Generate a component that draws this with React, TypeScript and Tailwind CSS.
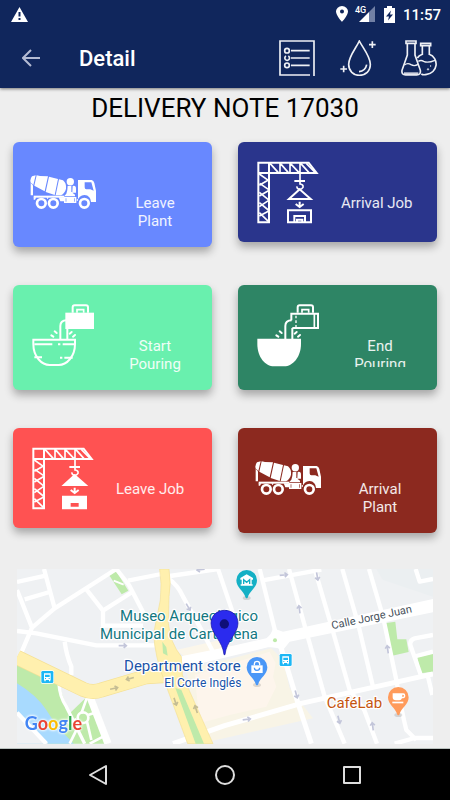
import type { ReactNode } from 'react';

function MixerTruckIcon() {
  return (
    <svg viewBox="90 90 198 198" className="size-[66px] shrink-0" fill="currentColor" aria-hidden="true">
      <path d="M96 139 L107 136 L100 165 L92 157 Q89 148 96 139Z" />
      <path d="M110 136 L120 138 L144 139 L134 184 L103 167Z" />
      <path d="M147 140 L174 147 L164 195 L137 186Z" />
      <path d="M177 148 L189 151 Q200 160 198 176 Q195 189 183 196 L167 196Z" />
      <path d="M92 158 L99 166 V196 H92Z" />
      <circle cx="211" cy="155" r="11" />
      <path d="M203 168 L214 167 V186 H217 L218 168 Q228 165 228 176 V188 H217 L225 194 V199 H193 Q194 196 199 191 Q203 180 203 168Z" />
      <path d="M101 197 H193 V203 H101Z" />
      <path fillRule="evenodd" d="M192 201 H229 V219 H192Z M197 205 V215 H199 V205Z M222 205 V215 H224 V205Z" />
      <path
        fillRule="evenodd"
        d="M234 150 H275 Q281 151 283 159 L288 182 V216 H273 A20 20 0 0 0 233 214 L229 210 L234 206Z M254 157 H274 L281 182 L271 178 H259 Q254 178 254 172Z"
      />
      <g fill="none" stroke="currentColor" strokeWidth="8">
        <circle cx="124" cy="220" r="13" />
        <circle cx="160" cy="220" r="13" />
        <circle cx="253" cy="220" r="13" />
      </g>
      <path d="M101 202 H109 L105 209 H101Z M139 202 H146 L143 208Z M176 202 H192 V214 H181Z" />
    </svg>
  );
}

function CraneIcon({ solid = false }: { solid?: boolean }) {
  return (
    <svg viewBox="90 90 198 198" className="size-[66px] shrink-0" fill="none" stroke="currentColor" strokeWidth="6" aria-hidden="true">
      <path d="M100 98 H251 L275 129 H132 V277 H100Z" />
      <path d="M100 129 H132 V98" />
      <path
        strokeWidth="5"
        d="M135 100 L160 128 M165 128 V98 M166 100 L190 128 M195 128 V98 M196 100 L222 128 M225 98 V150 M227 100 L252 128 M244 100 L271 128"
      />
      <path
        strokeWidth="5"
        d="M103 132 L130 151 M130 150 L103 166 M104 160 L130 178 M130 182 L103 198 M103 187 L130 209 M130 212 L103 230 M103 218 L130 240 M130 244 L103 258 M103 248 L130 274"
      />
      <path d="M208 153 H240" />
      <path d="M225 155 V162 Q236 164 234 172 Q230 179 222 178 Q216 176 215 169" strokeWidth="5" />
      <path d="M224 178 L192 207 H257Z" fill={solid ? 'currentColor' : 'none'} strokeWidth="6" />
      <path d="M224 215 V230 M212 222 L224 231 L236 222" strokeWidth="6" />
      {solid ? (
        <path d="M186 239 H261 V280 H186Z M212 261 V272 H236 V261Z" fill="currentColor" fillRule="evenodd" stroke="none" />
      ) : (
        <path d="M189 241 H258 V277 H189Z M208 277 V258 H240 V277 M216 277 V269 H232 V277" strokeWidth="6" />
      )}
    </svg>
  );
}

function PouringIcon({ full = false }: { full?: boolean }) {
  return (
    <svg viewBox="90 83 198 198" className="size-[66px] shrink-0" fill="none" stroke="currentColor" strokeWidth="6" aria-hidden="true">
      <path d="M218 112 V96 Q218 90 224 90 H258 Q264 90 264 96 V112" />
      <path d="M231 112 V103 H251 V112" strokeWidth="5" />
      {full ? (
        <>
          <path d="M199 135 V115 H279 V158 H202" />
          <path d="M268 115 V158" strokeWidth="5" />
          <path d="M213 121 V156" strokeWidth="4" strokeDasharray="8 6" />
        </>
      ) : (
        <path d="M196 112 H282 V161 H196Z" fill="currentColor" stroke="none" />
      )}
      <path d="M200 135 Q181 135 181 152 V192 M202 158 V192" />
      <path d="M164 168 L170 173 M154 180 L160 184 M215 170 L209 175 M225 179 L219 184" strokeLinecap="round" />
      {full ? (
        <path d="M97 190 H228 V206 C228 246 202 273 178 273 H147 C121 273 97 246 97 206Z" fill="currentColor" stroke="none" />
      ) : (
        <>
          <path d="M100 193 H225 V206 C225 244 200 269 176 269 H149 C125 269 100 244 100 206Z" />
          <path d="M103 207 H157 M174 207 H181 M188 207 H222 M103 246 H126 M180 247 H187 M193 247 H218" />
        </>
      )}
    </svg>
  );
}

function ListIcon() {
  return (
    <svg viewBox="162 120 108 108" className="size-9" fill="none" stroke="currentColor" strokeWidth="5" aria-hidden="true">
      <path d="M267 228 V123 H165 V225 H255" />
      <path d="M198 152 H254 M198 174 H254 M198 196 H254" />
      <circle cx="186" cy="152" r="7" />
      <path d="M183 168 A7 7 0 1 0 190 168" />
      <circle cx="186" cy="196" r="7" />
    </svg>
  );
}

function DropIcon() {
  return (
    <svg viewBox="345 120 108 108" className="size-9" fill="none" stroke="currentColor" strokeWidth="5" aria-hidden="true">
      <path d="M403 123 C394 143 371 169 371 193 C371 213 385 226 403 226 C422 226 436 213 436 193 C436 169 413 143 403 123Z" />
      <path d="M402 215 Q421 214 425 194" />
      <path d="M442 124 V144 M432 134 H452 M356 197 V217 M346 207 H366" />
    </svg>
  );
}

function FlasksIcon() {
  return (
    <svg viewBox="529 120 108 108" className="size-9" fill="none" stroke="currentColor" strokeWidth="5" aria-hidden="true">
      <path d="M544 123 H574 V130 H544Z M548 131 V165 L532 211 Q530 225 543 225 H576 Q589 225 587 211 L571 165 V131" />
      <path d="M539 195 Q549 187 559 194 Q569 200 580 193" strokeWidth="4" />
      <path d="M538 221 H581" strokeWidth="8" opacity="0.85" />
      <path d="M588 130 H618 V137 H588Z M593 138 V163 Q582 167 578 174 M614 138 V163 A31 31 0 0 1 606 223 Q596 226 590 222" />
      <path d="M581 184 Q589 179 597 184 Q609 190 631 181" strokeWidth="4" />
      <circle cx="610" cy="208" r="2" strokeWidth="3" />
      <circle cx="618" cy="198" r="1" strokeWidth="3" />
    </svg>
  );
}

const TILES: {
  label: string;
  icon: ReactNode;
  tile: string;
  text: string;
}[] = [
  { label: 'Leave Plant', icon: <MixerTruckIcon />, tile: 'h-[105px] bg-[#6888ff]', text: 'px-2 text-center' },
  { label: 'Arrival Job', icon: <CraneIcon />, tile: 'h-[100px] bg-[#2a358c]', text: 'text-left' },
  { label: 'Start Pouring', icon: <PouringIcon />, tile: 'h-[105px] bg-[#69f0ae]', text: 'px-2 text-center' },
  { label: 'End Pouring', icon: <PouringIcon full />, tile: 'h-[105px] bg-[#2e8565]', text: 'h-[30px] overflow-hidden px-2 text-center' },
  { label: 'Leave Job', icon: <CraneIcon solid />, tile: 'h-[100px] bg-[#ff5252]', text: 'text-left' },
  { label: 'Arrival Plant', icon: <MixerTruckIcon />, tile: 'h-[105px] bg-[#8c291f]', text: 'px-2 text-center' },
];

function Arrow({ x, y, angle, color = '#c3c6da' }: { x: number; y: number; angle: number; color?: string }) {
  return (
    <path
      d="M-13 0 H8 M2 -7 L10 0 L2 7"
      transform={`translate(${x} ${y}) rotate(${angle})`}
      stroke={color}
      strokeWidth="5"
      fill="none"
    />
  );
}

function BusStop({ x, y }: { x: number; y: number }) {
  return (
    <g transform={`translate(${x} ${y})`}>
      <rect x="-2" y="-2" width="40" height="40" rx="5" fill="#fff" />
      <rect width="36" height="36" rx="4" fill="#1db7f5" />
      <path fillRule="evenodd" fill="#fff" d="M8 7 H28 V27 H27 V31 H23 V27 H13 V31 H9 V27 H8Z M11 11 V18 H25 V11Z M11 21 V24 H14 V21Z M22 21 V24 H25 V21Z" />
    </g>
  );
}

function PoiPin({ x, y, color, children }: { x: number; y: number; color: string; children: ReactNode }) {
  return (
    <g transform={`translate(${x} ${y})`}>
      <ellipse cx="0" cy="53" rx="12" ry="6" fill="#000" opacity="0.12" />
      <path d="M0 -31 A31 31 0 0 1 31 0 C31 22 10 30 3 52 Q0 56 -3 52 C-10 30 -31 22 -31 0 A31 31 0 0 1 0 -31Z" fill={color} />
      {children}
    </g>
  );
}

function LocationMap() {
  return (
    <svg viewBox="52 27 1248 524" className="block h-auto w-full bg-[#eff1f3]" role="img" aria-label="Job location map">
      {/* blocks */}
      <path d="M1130 27 H1300 V110 L1150 60Z" fill="#ebeff1" />
      <path d="M530 270 L660 240 L700 262 L560 295Z" fill="#fbf6ea" />
      <path d="M560 330 L815 265 L850 300 L870 385 L940 475 L600 551Z" fill="#f8f4e6" />
      <path d="M585 345 L810 275 L828 310 L820 350 L830 380 L800 440 L690 465 L600 490Z" fill="#fdf5ec" />

      {/* park and water */}
      <path d="M52 310 L178 372 L200 440 L262 408 L325 551 H52Z" fill="#beeaaa" />
      <path d="M180 374 L260 412 L208 462Z" fill="#eff1f3" />
      <path d="M52 370 Q110 405 140 450 Q170 500 222 551 H52Z" fill="#a8dafe" />
      <path d="M52 455 L145 551 H52Z" fill="#eff1f3" />
      <path d="M326 42 L348 31 L386 92 L366 103Z" fill="#beeaaa" />
      <path d="M1155 190 L1187 185 L1193 238 L1220 238 L1227 276 L1178 287Z" fill="#beeaaa" />
      <path d="M1253 292 L1300 280 V335 L1263 340Z" fill="#beeaaa" />

      {/* streets */}
      <g fill="none" stroke="#fff" strokeWidth="13" strokeLinejoin="round">
        <path d="M52 458 L140 551" />
        <path d="M52 66 L138 47 M133 27 L165 145 M75 118 L150 96 M52 90 L97 203 L64 280" />
        <path d="M97 203 L165 145 L350 27 L388 75 L432 160" />
        <path d="M260 88 L310 152 V197 H430 M310 152 L398 96 M385 62 L485 42 M510 48 L655 27" />
        <path d="M52 213 L110 220 L290 256 H465 M195 245 Q200 285 215 320 V345" />
        <path d="M178 372 Q180 410 200 440 L255 551" strokeWidth="10" />
        <path d="M270 408 L325 551" strokeWidth="22" />
        <path d="M505 55 Q535 75 550 110 L600 200 L640 275" />
        <path d="M655 27 L690 130 L710 190" />
        <path d="M780 27 L828 220 M785 62 L965 29" />
        <path d="M840 250 L895 430 L935 551" strokeWidth="15" />
        <path d="M868 27 L920 215 L975 410 L1035 551" />
        <path d="M945 27 L1000 215 L1050 390 M1090 440 L1132 551" />
        <path d="M1050 390 L1094 450" />
        <path d="M1028 27 L1075 190 L1120 380 M1108 27 L1150 170 L1190 360 Q1205 450 1220 510 L1250 540" />
        <path d="M520 551 L675 497 L905 430 L1300 342" strokeWidth="15" />
        <path d="M1185 551 L1245 534 H1300" />
        <path d="M1300 225 L1245 235 Q1230 240 1232 255 L1265 350 M1250 288 L1300 275 M1248 27 L1260 65 L1300 57 M1285 350 L1298 405" />
      </g>
      <path d="M530 292 L700 257 L800 235 Q815 225 820 205 L850 215 L1300 117 V157 L870 245 L850 270 Q830 260 805 262 L560 320Z" fill="#fff" />
      <circle cx="826" cy="241" r="6" fill="#beeaaa" />
      <g fill="none" stroke="#fff" strokeWidth="8">
        <circle cx="250" cy="473" r="16" />
        <path d="M245 460 L262 412 M230 478 L205 490 M262 485 L275 540 M265 465 L295 455 M240 490 L210 551 M270 551 L310 530" />
        <path d="M342 62 L372 74" strokeWidth="6" />
      </g>

      {/* avenues */}
      <g fill="none" strokeLinejoin="round">
        <path d="M52 292 L250 388 Q278 400 305 390 L440 350 L520 345" stroke="#f5e196" strokeWidth="45" />
        <path d="M52 292 L250 388 Q278 400 305 390 L440 350 L520 345" stroke="#fff0ae" strokeWidth="41" />
      </g>
      <path d="M480 27 H508 Q515 70 508 110 L506 190 Q512 250 545 290 L548 345 L640 551 H564 L495 365 Q465 290 462 220 L482 120 Q487 70 480 27Z" fill="#fff0ae" stroke="#f5e196" strokeWidth="2" />
      <path d="M488 245 L500 262 L504 287 L490 280Z M527 384 L545 390 L613 551 H588Z" fill="#beeaaa" />

      <Arrow x={370} y={257} angle={0} />
      <Arrow x={566} y={142} angle={60} />
      <Arrow x={602} y={29} angle={172} />
      <Arrow x={344} y={385} angle={-12} color="#c5bd94" />
      <Arrow x={390} y={356} angle={165} color="#c5bd94" />
      <Arrow x={527} y={426} angle={72} color="#c5bd94" />
      <Arrow x={589} y={447} angle={-108} color="#c5bd94" />
      <Arrow x={853} y={45} angle={-6} />
      <Arrow x={953} y={50} angle={80} />
      <Arrow x={899} y={147} angle={-98} />
      <Arrow x={1164} y={267} angle={-98} />
      <Arrow x={890} y={404} angle={75} />
      <Arrow x={742} y={478} angle={-8} />
      <Arrow x={1018} y={480} angle={75} />
      <Arrow x={1119} y={498} angle={-98} />

      <BusStop x={125} y={333} />
      <BusStop x={840} y={282} />

      {/* labels */}
      <g className="font-['Roboto',sans-serif]" stroke="#fff" strokeWidth="7" strokeLinejoin="round" paintOrder="stroke">
        <g fontSize="45" textAnchor="end" fill="#12777f">
          <text x="775" y="183">Museo Arqueológico</text>
          <text x="775" y="238">Municipal de Cartagena</text>
        </g>
        <g textAnchor="end" fill="#1a53a8">
          <text x="723" y="334" fontSize="45">Department store</text>
          <text x="725" y="380" fontSize="36">El Corte Inglés</text>
        </g>
        <text x="981" y="444" fontSize="45" fill="#c5550f">CaféLab</text>
        <text x="998" y="208" fontSize="33" fill="#46505a" transform="rotate(-12 998 208)">Calle Jorge Juan</text>
      </g>
      <text x="75" y="511" fontSize="54" className="font-['Lato',sans-serif] font-bold [filter:drop-shadow(0_0_3px_white)_drop-shadow(0_0_3px_white)]">
        <tspan fill="#4285f4">G</tspan>
        <tspan fill="#ea4335">o</tspan>
        <tspan fill="#fbbc05">o</tspan>
        <tspan fill="#4285f4">g</tspan>
        <tspan fill="#34a853">l</tspan>
        <tspan fill="#ea4335">e</tspan>
      </text>

      <PoiPin x={741} y={61} color="#14b0c5">
        <path d="M0 -18 L19 -7 V-2 H15 V12 H18 V16 H-18 V12 H-15 V-2 H-19 V-7Z" fill="#fff" />
        <path d="M-9 11 V-2 L0 6 L9 -2 V11" fill="none" stroke="#14b0c5" strokeWidth="4" />
      </PoiPin>
      <PoiPin x={772} y={322} color="#4a97f7">
        <path d="M-17 -6 H17 V17 H-17Z" fill="#fff" />
        <path d="M-8 -6 V-10 A8 8 0 0 1 8 -10 V-6" fill="none" stroke="#fff" strokeWidth="4" />
        <path d="M-8 1 A8 8 0 0 0 8 1" fill="none" stroke="#4a97f7" strokeWidth="4" />
      </PoiPin>
      <PoiPin x={1196} y={412} color="#ff9b5b">
        <path fillRule="evenodd" d="M-17 -12 H15 Q21 -12 21 -5 Q21 3 11 3 Q9 9 3 9 H-7 Q-17 9 -17 0Z M12 -8 V-1 Q17 -1 17 -5 Q17 -8 12 -8Z" fill="#fff" />
        <path d="M-18 13 H15 V18 H-18Z" fill="#fff" />
      </PoiPin>

      <path d="M675 151 C698 151 715 167 715 190 C715 220 679 245 676 284 H673 C670 245 634 220 634 190 C634 167 652 151 675 151Z" fill="#2b2bee" stroke="#1414a0" strokeWidth="2" />
      <circle cx="674" cy="192" r="14" fill="#0f0f78" />
    </svg>
  );
}

export default function App() {
  return (
    <div className="flex min-h-screen flex-col bg-[#eeeeee] font-['Roboto',sans-serif] text-black">
      <header className="z-10 bg-[#10265c] text-white shadow-[0_1px_3px_rgba(0,0,0,0.5)]">
        <div className="flex h-7 items-center justify-between pr-[9px] pl-[11px]">
          <svg viewBox="0 0 17 15" className="h-[15px] w-[17px]" fill="currentColor" aria-hidden="true">
            <path fillRule="evenodd" d="M8.500 0 L17 15 H0Z M7.500 5 V9.500 H9.500 V5Z M7.500 11 V13 H9.500 V11Z" />
          </svg>
          <div className="flex items-center">
            <svg viewBox="0 0 12 16" className="h-4 w-3" fill="currentColor" aria-hidden="true">
              <path fillRule="evenodd" d="M6 0 A6 5.500 0 0 1 12 5.600 C12 9.500 6 16 6 16 S0 9.500 0 5.600 A6 5.500 0 0 1 6 0Z M6 3.500 A2 2 0 1 0 6 7.500 A2 2 0 1 0 6 3.500Z" />
            </svg>
            <div className="relative ml-[7px] h-4 w-5">
              <svg viewBox="0 0 20 16" className="h-4 w-5" aria-hidden="true">
                <path d="M20 0 L14 6 V16 H20Z" fill="#7180a5" />
                <path d="M14 6 L4 16 H14Z" fill="#fff" />
              </svg>
              <span className="absolute top-0 left-0 bg-[#10265c] text-[9px] leading-[8px] font-medium">4G</span>
            </div>
            <svg viewBox="0 0 11 17" className="ml-[9px] h-[17px] w-[11px]" fill="currentColor" aria-hidden="true">
              <path fillRule="evenodd" d="M3 0 H8 V2 H11 V17 H0 V2 H3Z M7 4.500 L2 10.500 H5 L4 14.500 L9 8.500 H6Z" />
            </svg>
            <span className="ml-2 pt-0.5 text-[15px] leading-5 font-medium">11:57</span>
          </div>
        </div>
        <div className="flex h-[60px] items-center pr-[13px] pl-[22px]">
          <button type="button" aria-label="Back" className="text-[#b4bbd3]">
            <svg viewBox="0 0 18 18" className="size-[18px]" fill="none" stroke="currentColor" strokeWidth="2" aria-hidden="true">
              <path d="M18 9 H1 M9 1 L1 9 L9 17" />
            </svg>
          </button>
          <h1 className="ml-[39px] flex-1 pt-0.5 text-[22px] leading-6 font-medium">Detail</h1>
          <div className="flex gap-[25px] text-[#eef0f5]">
            <button type="button" aria-label="List"><ListIcon /></button>
            <button type="button" aria-label="Water"><DropIcon /></button>
            <button type="button" aria-label="Samples"><FlasksIcon /></button>
          </div>
        </div>
      </header>

      <main className="flex-1">
        <h2 className="pt-1 text-center text-[26px] leading-8">DELIVERY NOTE 17030</h2>

        <div className="mt-[18px] grid grid-cols-2 items-start gap-x-[26px] gap-y-[38px] px-[13px]">
          {TILES.map((t) => (
            <button
              key={t.label}
              type="button"
              className={`flex items-start gap-5 rounded-[6px] px-[17px] pt-[18px] text-white shadow-[0_5px_8px_rgba(0,0,0,0.3)] ${t.tile}`}
            >
              {t.icon}
              <span className={`mt-[34px] w-[78px] text-[15px] leading-[18px] text-white/90 ${t.text}`}>{t.label}</span>
            </button>
          ))}
        </div>

        <div className="mt-9 px-[17px] pb-1">
          <LocationMap />
        </div>
      </main>

      <nav className="flex h-[53px] items-center justify-center gap-[103px] border-t border-[#b9c1be] bg-black text-[#dedede]">
        <button type="button" aria-label="Back">
          <svg viewBox="0 0 24 24" className="size-6" fill="none" stroke="currentColor" strokeWidth="2" strokeLinejoin="round" aria-hidden="true">
            <path d="M20 3 V21 L4 12Z" />
          </svg>
        </button>
        <button type="button" aria-label="Home">
          <svg viewBox="0 0 24 24" className="size-6" fill="none" stroke="currentColor" strokeWidth="2" aria-hidden="true">
            <circle cx="12" cy="12" r="9" />
          </svg>
        </button>
        <button type="button" aria-label="Overview">
          <svg viewBox="0 0 24 24" className="size-6" fill="none" stroke="currentColor" strokeWidth="2" strokeLinejoin="round" aria-hidden="true">
            <path d="M4 4 H20 V20 H4Z" />
          </svg>
        </button>
      </nav>
    </div>
  );
}
